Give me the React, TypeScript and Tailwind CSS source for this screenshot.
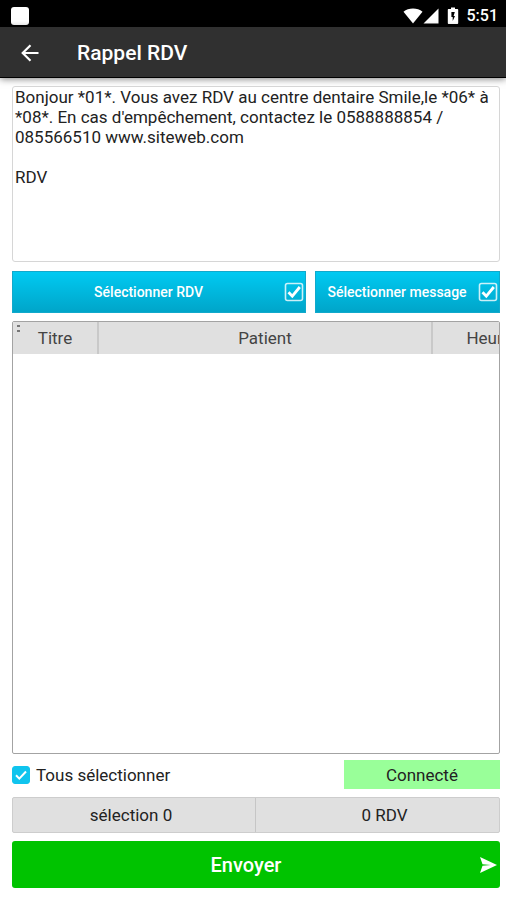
import React, { useState } from 'react';

const INITIAL_MESSAGE = `Bonjour *01*. Vous avez RDV au centre dentaire Smile,le *06* à *08*. En cas d'empêchement, contactez le 0588888854 / 085566510 www.siteweb.com

RDV`;

const StatusBar: React.FC = () => (
  <div className="flex h-[27px] items-center justify-between bg-black pt-1 pr-2 pl-[11px] text-white">
    <div className="h-[18px] w-[18px] rounded-[3px] bg-white" />
    <div className="flex items-center">
      <svg className="h-4 w-5" viewBox="0 0 20 16" fill="currentColor" aria-hidden="true">
        <path d="M0.5 3.8C3 1.4 6.5 0.5 10 0.5s7 0.9 9.5 3.3L10 15.5z" />
      </svg>
      <svg className="h-4 w-4" viewBox="0 0 16 16" fill="currentColor" aria-hidden="true">
        <path d="M15.5 0.5v15H0.5z" />
      </svg>
      <svg className="ml-2 h-[17px] w-3" viewBox="0 0 12 17" aria-hidden="true">
        <path
          fill="currentColor"
          d="M4 0.5h4V2h2.2c.6 0 1 .4 1 1v13c0 .6-.4 1-1 1H1.8c-.6 0-1-.4-1-1V3c0-.6.4-1 1-1H4z"
        />
        <path fill="#000" d="M7.8 5H4.4v5h1.3v4L8 9H6.6z" />
      </svg>
      <span className="ml-2 text-base leading-5 font-medium">5:51</span>
    </div>
  </div>
);

const CheckBoxIcon: React.FC = () => (
  <svg className="h-5 w-5 shrink-0" viewBox="0 0 20 20" fill="none" stroke="#fff" aria-hidden="true">
    <rect x="1.5" y="1.5" width="17" height="17" rx="2" strokeWidth="1.6" strokeOpacity="0.8" />
    <path d="M4.5 10.2l3.8 4L15.8 5" strokeWidth="2.8" />
  </svg>
);

const SelectButton: React.FC<{ label: string; className: string }> = ({ label, className }) => (
  <button
    type="button"
    className={`flex h-[42px] items-center border border-[#11a9cb] bg-linear-to-b from-[#00caf2] to-[#00a5c9] pr-px text-sm leading-5 font-medium text-white ${className}`}
  >
    <span className="flex-1 text-center whitespace-nowrap">{label}</span>
    <CheckBoxIcon />
  </button>
);

const App: React.FC = () => {
  const [message, setMessage] = useState(INITIAL_MESSAGE);
  const [allSelected, setAllSelected] = useState(true);

  return (
    <div className="flex min-h-screen flex-col bg-white font-[Roboto,sans-serif] text-[#222]">
      <StatusBar />
      <header className="flex h-[51px] items-center border-b border-black bg-[#303030] pt-0.5 pl-5 text-white shadow-[0_1px_7px_rgba(0,0,0,0.5)]">
        <button type="button" aria-label="Retour" className="h-5 w-5">
          <svg
            className="h-5 w-5"
            viewBox="0 0 20 20"
            fill="none"
            stroke="currentColor"
            strokeWidth="2.2"
            aria-hidden="true"
          >
            <path d="M18.5 10H3M10.5 2.2L2.7 10l7.8 7.8" />
          </svg>
        </button>
        <h1 className="ml-[37px] text-[21px] leading-6 font-medium">Rappel RDV</h1>
      </header>

      <main className="flex flex-1 flex-col pt-2 pr-1.5 pb-3 pl-3">
        <textarea
          aria-label="Message"
          value={message}
          onChange={(e) => setMessage(e.target.value)}
          spellCheck={false}
          className="block h-[176px] w-full resize-none rounded-[3px] border border-[#d6d6d6] bg-white px-0.5 text-[17px] leading-5 outline-none"
        />

        <div className="mt-[9px] flex gap-[9px]">
          <SelectButton label="Sélectionner RDV" className="flex-[8]" />
          <SelectButton label="Sélectionner message" className="flex-[5]" />
        </div>

        <div className="relative mt-2 flex-1 overflow-hidden rounded-[2px] border border-[#a3a3a3]">
          <table className="w-full min-w-[530px] table-fixed border-collapse">
            <thead>
              <tr className="h-8 bg-[#e0e0e0] text-[17px] leading-5 text-[#444]">
                <th className="w-[85px] border-r-2 border-[#c9c9c9] font-normal">Titre</th>
                <th className="border-r-2 border-[#c9c9c9] font-normal">Patient</th>
                <th className="w-[111px] pl-0.5 font-normal">Heure</th>
              </tr>
            </thead>
            <tbody />
          </table>
          {/* column menu handle */}
          <div className="absolute top-[3px] left-1 flex flex-col gap-[3px]">
            <span className="h-0.5 w-[3px] bg-[#777]" />
            <span className="h-0.5 w-[3px] bg-[#777]" />
          </div>
        </div>

        <div className="mt-1.5 flex h-[29px] items-center justify-between">
          <label className="flex items-center gap-1.5 text-[17px] leading-5">
            <span className="relative h-[18px] w-[18px]">
              <input
                type="checkbox"
                checked={allSelected}
                onChange={(e) => setAllSelected(e.target.checked)}
                className="block h-[18px] w-[18px] appearance-none rounded-[3px] border border-[#10c4ee] checked:bg-[#10c4ee]"
              />
              {allSelected && (
                <svg
                  className="pointer-events-none absolute inset-0"
                  viewBox="0 0 18 18"
                  fill="none"
                  stroke="#fff"
                  strokeWidth="2"
                  aria-hidden="true"
                >
                  <path d="M4 9.3l3.3 3.3L14 5.5" />
                </svg>
              )}
            </span>
            Tous sélectionner
          </label>
          <div className="flex h-full w-[32%] items-center justify-center bg-[#99ff99] text-[17px] leading-5">
            Connecté
          </div>
        </div>

        <div className="mt-2 grid h-9 grid-cols-2 rounded-[2px] border border-[#cdcdcd] bg-[#e0e0e0] text-[17px] leading-5">
          <div className="flex items-center justify-center border-r border-[#c6c6c6] pr-1.5">sélection 0</div>
          <div className="flex items-center justify-center pl-3.5">0 RDV</div>
        </div>

        <button
          type="button"
          className="mt-2 flex h-[47px] items-center rounded-[3px] bg-[#00c300] pr-[3px] text-xl leading-6 font-medium text-white"
        >
          <span className="flex-1 text-center">Envoyer</span>
          <svg className="h-4 w-[17px]" viewBox="0 0 17 16" fill="currentColor" aria-hidden="true">
            <path d="M0 0l17 8L0 16l2.5-7.2L11 8 2.5 7.2z" />
          </svg>
        </button>
      </main>
    </div>
  );
};

export default App;
